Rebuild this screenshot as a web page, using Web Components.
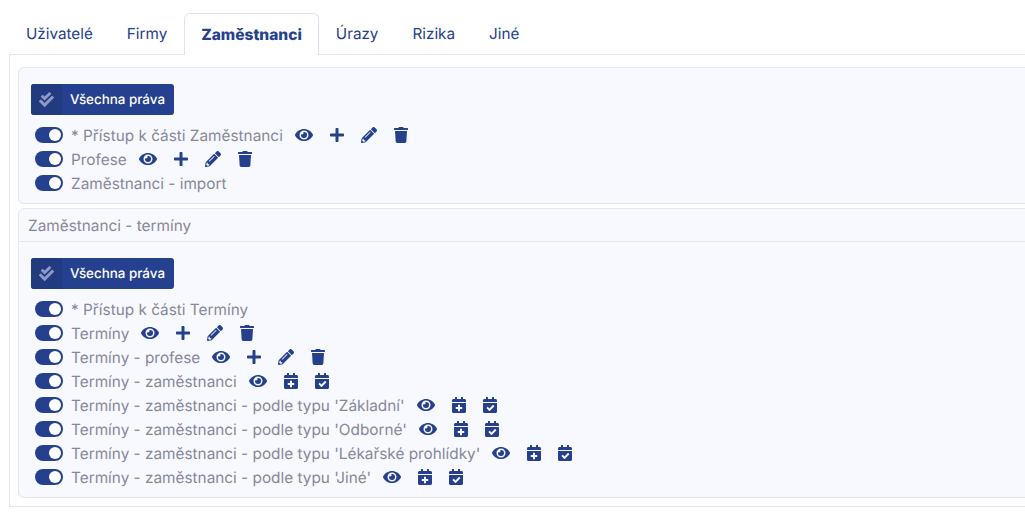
<!DOCTYPE html>
<html lang="cs"><head><meta charset="utf-8"><title>Práva</title>
<style>
html,body{margin:0;padding:0;background:#fff;overflow:hidden;height:519px}
body{font-family:Inter,"Liberation Sans",sans-serif;font-size:15.35px;color:#87879a;text-rendering:geometricPrecision}
app-root{width:1060px;margin:13px 0 0 9px}
</style></head><body>
<app-root>
  <tab-bar>
    <tab-item>Uživatelé</tab-item><tab-item>Firmy</tab-item><tab-item active>Zaměstnanci</tab-item><tab-item>Úrazy</tab-item><tab-item>Rizika</tab-item><tab-item>Jiné</tab-item>
  </tab-bar>
  <tab-panel>
    <perm-card>
      <all-button>Všechna práva</all-button>
      <perm-list>
        <perm-row icons="eye plus pencil trash">* Přístup k části Zaměstnanci</perm-row>
        <perm-row icons="eye plus pencil trash">Profese</perm-row>
        <perm-row>Zaměstnanci - import</perm-row>
      </perm-list>
    </perm-card>
    <perm-card heading="Zaměstnanci - termíny">
      <all-button>Všechna práva</all-button>
      <perm-list>
        <perm-row>* Přístup k části Termíny</perm-row>
        <perm-row icons="eye plus pencil trash">Termíny</perm-row>
        <perm-row icons="eye plus pencil trash">Termíny - profese</perm-row>
        <perm-row icons="eye calplus calcheck">Termíny - zaměstnanci</perm-row>
        <perm-row icons="eye calplus calcheck">Termíny - zaměstnanci - podle typu 'Základní'</perm-row>
        <perm-row icons="eye calplus calcheck">Termíny - zaměstnanci - podle typu 'Odborné'</perm-row>
        <perm-row icons="eye calplus calcheck">Termíny - zaměstnanci - podle typu 'Lékařské prohlídky'</perm-row>
        <perm-row icons="eye calplus calcheck">Termíny - zaměstnanci - podle typu 'Jiné'</perm-row>
      </perm-list>
    </perm-card>
  </tab-panel>
</app-root>
<script>
const ICONS={
eye:[576,"M572.52 241.4C518.29 135.59 410.93 64 288 64S57.68 135.64 3.48 241.41a32.35 32.35 0 0 0 0 29.19C57.71 376.41 165.07 448 288 448s230.32-71.64 284.52-177.41a32.35 32.35 0 0 0 0-29.19zM288 400a144 144 0 1 1 144-144 143.93 143.93 0 0 1-144 144zm0-240a95.31 95.31 0 0 0-25.31 3.79 47.85 47.85 0 0 1-66.9 66.9A95.78 95.78 0 1 0 288 160z"],
plus:[448,"M416 208H272V64c0-17.67-14.33-32-32-32h-32c-17.67 0-32 14.33-32 32v144H32c-17.67 0-32 14.33-32 32v32c0 17.67 14.33 32 32 32h144v144c0 17.67 14.33 32 32 32h32c17.67 0 32-14.33 32-32V304h144c17.67 0 32-14.33 32-32v-32c0-17.67-14.33-32-32-32z"],
pencil:[512,"M497.9 142.1l-46.1 46.1c-4.7 4.7-12.3 4.7-17 0l-111-111c-4.7-4.7-4.7-12.3 0-17l46.1-46.1c18.7-18.7 49.1-18.7 67.9 0l60.1 60.1c18.8 18.7 18.8 49.1 0 67.9zM284.2 99.8L21.6 362.4.4 483.9c-2.9 16.4 11.4 30.6 27.8 27.8l121.5-21.3 262.6-262.6c4.7-4.7 4.7-12.3 0-17l-111-111c-4.8-4.7-12.4-4.7-17.1 0zM124.1 339.9c-5.5-5.5-5.5-14.3 0-19.8l154-154c5.5-5.5 14.3-5.5 19.8 0s5.5 14.3 0 19.8l-154 154c-5.5 5.5-14.3 5.5-19.8 0zM88 424h48v36.3l-64.5 11.3-31.1-31.1L51.7 376H88v48z"],
trash:[448,"M432 32H312l-9.4-18.7A24 24 0 0 0 281.1 0H166.8a23.72 23.72 0 0 0-21.4 13.3L136 32H16A16 16 0 0 0 0 48v32a16 16 0 0 0 16 16h416a16 16 0 0 0 16-16V48a16 16 0 0 0-16-16zM53.2 467a48 48 0 0 0 47.9 45h245.8a48 48 0 0 0 47.9-45L416 128H32z"],
calplus:[448,"M436 160H12c-6.6 0-12-5.4-12-12v-36c0-26.5 21.5-48 48-48h48V12c0-6.6 5.4-12 12-12h40c6.6 0 12 5.4 12 12v52h128V12c0-6.6 5.4-12 12-12h40c6.6 0 12 5.4 12 12v52h48c26.5 0 48 21.5 48 48v36c0 6.6-5.4 12-12 12zM12 192h424c6.6 0 12 5.4 12 12v260c0 26.5-21.5 48-48 48H48c-26.5 0-48-21.5-48-48V204c0-6.6 5.4-12 12-12zm316 140c0-6.6-5.4-12-12-12h-60v-60c0-6.6-5.4-12-12-12h-40c-6.6 0-12 5.4-12 12v60h-60c-6.6 0-12 5.4-12 12v40c0 6.6 5.4 12 12 12h60v60c0 6.6 5.4 12 12 12h40c6.6 0 12-5.4 12-12v-60h60c6.6 0 12-5.4 12-12v-40z"],
calcheck:[448,"M436 160H12c-6.6 0-12-5.4-12-12v-36c0-26.5 21.5-48 48-48h48V12c0-6.6 5.4-12 12-12h40c6.6 0 12 5.4 12 12v52h128V12c0-6.6 5.4-12 12-12h40c6.6 0 12 5.4 12 12v52h48c26.5 0 48 21.5 48 48v36c0 6.6-5.4 12-12 12zM12 192h424c6.6 0 12 5.4 12 12v260c0 26.5-21.5 48-48 48H48c-26.5 0-48-21.5-48-48V204c0-6.6 5.4-12 12-12zm346.8 95.9l-28.2-28.4c-4.7-4.7-12.3-4.7-17 0L207.3 365.1l-46.1-46.5c-4.7-4.7-12.3-4.7-17 0l-28.4 28.2c-4.7 4.7-4.7 12.3 0 17l82.6 83.2c4.7 4.7 12.3 4.7 17 0l143.4-142.2c4.7-4.7 4.8-12.3.1-17z"],
check:[512,"M505 174.8l-39.6-39.6c-9.4-9.4-24.6-9.4-33.9 0L192 374.7 80.6 263.2c-9.4-9.4-24.6-9.4-33.9 0L7 302.9c-9.4 9.4-9.4 24.6 0 34L175 505c9.4 9.4 24.6 9.4 33.9 0l296-296.2c9.4-9.5 9.4-24.7.1-34zm-324.3 106c6.2 6.3 16.4 6.3 22.6 0l208-208.2c6.2-6.3 6.2-16.4 0-22.6L366.1 4.7c-6.2-6.3-16.4-6.3-22.6 0L192 156.2l-55.4-55.5c-6.2-6.3-16.4-6.3-22.6 0L68.7 146c-6.2 6.3-6.2 16.4 0 22.7l112 112.1z"]
};
const svg=(n,h=16,f='currentColor')=>{const[w,d]=ICONS[n];return `<svg xmlns="http://www.w3.org/2000/svg" viewBox="0 0 ${w} 512" width="${w/512*h}" height="${h}" fill="${f}" style="display:block;flex:none"><path d="${d}"/></svg>`};
function def(tag,html,extra){customElements.define(tag,class extends HTMLElement{
  constructor(){super();this.attachShadow({mode:'open'}).innerHTML=html}
  connectedCallback(){extra&&extra.call(this)}
})}
def('app-root',`<style>:host{display:block}</style><slot></slot>`);
def('tab-bar',`<style>:host{display:flex;position:relative;z-index:1;margin-bottom:-1px;height:42px}</style><slot></slot>`);
def('tab-item',`<style>
:host{display:flex;box-sizing:border-box;align-items:center;padding:0 16px;height:41px;border:1px solid transparent;border-bottom:0;border-radius:6px 6px 0 0;color:#25408f;font-size:15.25px;line-height:20px}
:host([active]){background:#fff;border-color:#e2e2ee;font-weight:800;font-size:15.5px;height:42px}
</style><slot></slot>`);
def('tab-panel',`<style>:host{display:flex;flex-direction:column;gap:4px;border:1px solid #e4e4ef;padding:12px 0 8px 8px;background:#fff}</style><slot></slot>`);
def('perm-card',`<style>
:host{display:block;background:#f8f9fe;border:1px solid #e4e5f0;border-radius:6px}
.h{height:31px;display:flex;align-items:center;padding:1px 9px 0;border-bottom:1px solid #e4e5f0;color:#87879a;font-size:15.35px;line-height:20px}
.h[hidden]{display:none}
.b{padding:16px 12px 8px;display:flex;flex-direction:column;gap:8px}
</style><div class="h" hidden></div><div class="b"><slot></slot></div>`,function(){
  const h=this.shadowRoot.querySelector('.h'),t=this.getAttribute('heading');
  if(t){h.hidden=false;h.textContent=t}
});
def('all-button',`<style>
:host{display:inline-flex;align-self:flex-start;align-items:stretch;height:31px;background:#25408f;border-radius:3px;color:#fff;font-size:13.4px;font-weight:500;overflow:hidden}
.i{width:31px;display:flex;align-items:center;justify-content:center;background:#223a80;color:#8d9ac3}
.t{padding:0 9px 0 8px;display:flex;align-items:center}
</style><span class="i">${svg('check',15)}</span><span class="t"><slot></slot></span>`);
def('perm-list',`<style>:host{display:flex;flex-direction:column;padding-left:4px}</style><slot></slot>`);
def('perm-row',`<style>
:host{display:flex;align-items:center;height:24px;color:#87879a;font-size:15.35px}
.s{width:28px;height:16px;border-radius:8px;background:#25408f;position:relative;margin-right:8px;flex:none}
.s i{position:absolute;right:2px;top:2px;width:12px;height:12px;border-radius:50%;background:#fff}
.l{line-height:20px;padding-top:1px}
.a{display:flex;align-items:center;gap:17px;margin-left:12px;color:#25408f}
.a:empty{display:none}
</style><span class="s"><i></i></span><span class="l"><slot></slot></span><span class="a"></span>`,function(){
  const v=(this.getAttribute('icons')||'').split(' ').filter(Boolean);
  this.shadowRoot.querySelector('.a').innerHTML=v.map(n=>svg(n)).join('');
});
</script>
</body></html>
